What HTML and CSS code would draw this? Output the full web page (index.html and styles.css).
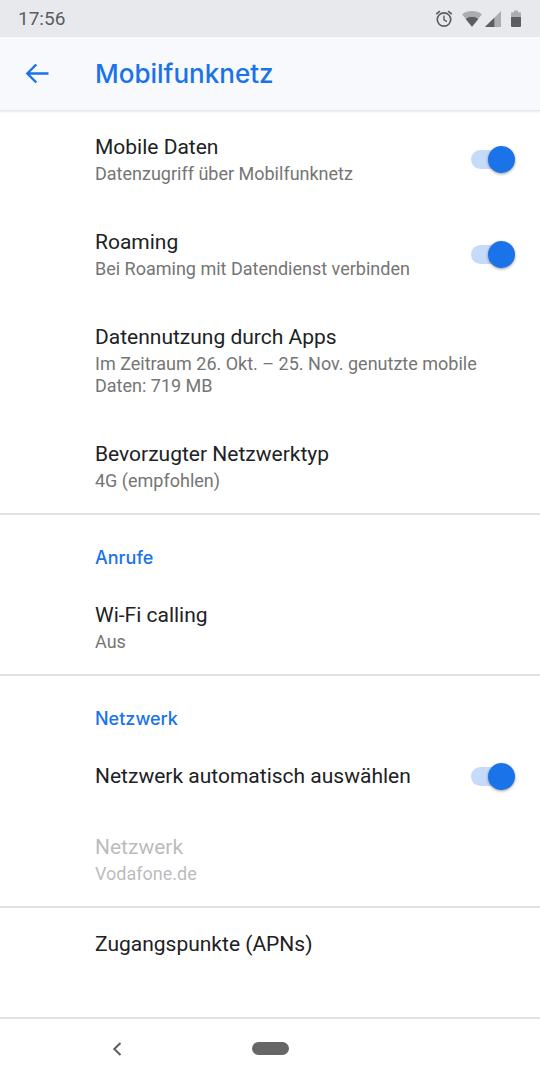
FILE: index.html
```html
<!DOCTYPE html>
<html lang="de">
<head>
<meta charset="utf-8">
<meta name="viewport" content="width=device-width, initial-scale=1">
<title>Mobilfunknetz</title>
<link rel="stylesheet" href="styles.css">
</head>
<body>
<div class="status-bar">
  <span class="clock">17:56</span>
  <div class="status-icons">
    <svg class="status-alarm" width="18" height="20" viewBox="0 0 18 20" fill="none" stroke="#5c5d60">
      <circle cx="9" cy="10.500" r="6.700" stroke-width="1.700"/>
      <path d="M9 6.500v4.400l2.900 1.800" stroke-width="1.400"/>
      <path d="M1.200 5.200l3.700-3.100M16.800 5.200l-3.700-3.100" stroke-width="1.700"/>
    </svg>
    <svg class="status-wifi" width="22" height="20" viewBox="0 0 22 20">
      <path d="M11 17.800L1 5.300Q5.300 2 11 2t10 3.300z" fill="#acadaf"/>
      <path d="M11 17.800L4.700 9.900Q7.400 7.800 11 7.800t6.300 2.100z" fill="#5c5d60"/>
    </svg>
    <svg width="16" height="20" viewBox="0 0 16 20">
      <path d="M16 2v16H0z" fill="#acadaf"/>
      <path d="M9.300 8.700V18H0z" fill="#5c5d60"/>
    </svg>
    <svg class="status-battery" width="10" height="20" viewBox="0 0 10 20">
      <path d="M3 1.500h4v1.700h2q1 0 1 1V8H0V4.200q0-1 1-1h2z" fill="#acadaf"/>
      <path d="M0 8h10v9q0 1-1 1H1q-1 0-1-1z" fill="#5c5d60"/>
    </svg>
  </div>
</div>

<header class="app-bar">
  <button class="back" type="button" aria-label="Zurück">
    <svg width="24" height="20" viewBox="0 0 24 20" fill="none" stroke="#1a73e8" stroke-width="2.400">
      <path d="M23.500 9.500H3M11.300 .5l-9 9 9 9"/>
    </svg>
  </button>
  <h1 class="app-title">Mobilfunknetz</h1>
</header>

<main class="settings">
  <section class="group">
    <label class="row">
      <span class="text"><span class="title">Mobile Daten</span><span class="summary">Datenzugriff über Mobilfunknetz</span></span>
      <input class="switch" type="checkbox" role="switch" checked>
    </label>
    <label class="row">
      <span class="text"><span class="title">Roaming</span><span class="summary">Bei Roaming mit Datendienst verbinden</span></span>
      <input class="switch" type="checkbox" role="switch" checked>
    </label>
    <button class="row" type="button">
      <span class="text"><span class="title">Datennutzung durch Apps</span><span class="summary">Im Zeitraum 26. Okt. – 25. Nov. genutzte mobile Daten: 719 MB</span></span>
    </button>
    <button class="row" type="button">
      <span class="text"><span class="title">Bevorzugter Netzwerktyp</span><span class="summary">4G (empfohlen)</span></span>
    </button>
  </section>
  <section class="group">
    <h2 class="category">Anrufe</h2>
    <button class="row" type="button">
      <span class="text"><span class="title">Wi-Fi calling</span><span class="summary">Aus</span></span>
    </button>
  </section>
  <section class="group">
    <h2 class="category">Netzwerk</h2>
    <label class="row">
      <span class="text"><span class="title">Netzwerk automatisch auswählen</span></span>
      <input class="switch" type="checkbox" role="switch" checked>
    </label>
    <button class="row" type="button" disabled>
      <span class="text"><span class="title">Netzwerk</span><span class="summary">Vodafone.de</span></span>
    </button>
  </section>
  <section class="group">
    <button class="row" type="button">
      <span class="text"><span class="title">Zugangspunkte (APNs)</span></span>
    </button>
  </section>
</main>

<nav class="nav-bar">
  <button class="nav-back" type="button" aria-label="Zurück">
    <svg width="10" height="14" viewBox="0 0 10 14" fill="none" stroke="#5c5c5c" stroke-width="2">
      <path d="M8.500 1L2.300 7l6.200 6"/>
    </svg>
  </button>
  <button class="nav-home" type="button" aria-label="Startbildschirm"></button>
</nav>
</body>
</html>
```
FILE: styles.css
```css
* {
  box-sizing: border-box;
}

body {
  margin: 0;
  min-height: 100vh;
  display: flex;
  flex-direction: column;
  background: #fff;
  color: #202124;
  font-family: Roboto, "Noto Sans", sans-serif;
}

button {
  padding: 0;
  border: 0;
  background: none;
  color: inherit;
  font: inherit;
  text-align: left;
}

svg {
  display: block;
}

.status-bar {
  display: flex;
  align-items: center;
  justify-content: space-between;
  height: 37px;
  padding: 0 19px 0 18px;
  background: #e8e9ed;
}

.clock {
  color: #5c5d60;
  font-size: 19px;
  line-height: 22px;
}

.status-icons {
  display: flex;
}

.status-alarm {
  margin-right: 8px;
}

.status-wifi {
  margin-right: 2px;
}

.status-battery {
  margin-left: 10px;
}

.app-bar {
  display: flex;
  align-items: center;
  height: 74px;
  padding-left: 25px;
  background: #f8f9fc;
  border-bottom: 1px solid #e6e7e9;
  box-shadow: 0 1px 2px #00000018;
}

.back {
  width: 70px;
}

.app-title {
  margin: 0;
  color: #1a73e8;
  font-family: Inter, Roboto, sans-serif;
  font-size: 26px;
  font-weight: 500;
  line-height: 32px;
}

.settings {
  flex: 1;
}

.group + .group {
  border-top: 2px solid #e2e2e2;
}

.category {
  margin: 0;
  padding: 32px 25px 11px 95px;
  color: #1a73e8;
  font-family: Inter, Roboto, sans-serif;
  font-size: 18px;
  font-weight: 500;
  line-height: 21px;
}

.row {
  display: flex;
  align-items: center;
  justify-content: space-between;
  gap: 20px;
  width: 100%;
  padding: 23px 25px 21px 95px;
}

.row:disabled {
  opacity: 0.3;
}

.text {
  display: flex;
  flex-direction: column;
  gap: 2px;
}

.title {
  font-size: 21px;
  line-height: 27px;
}

.summary {
  color: #757575;
  font-size: 18px;
  line-height: 22px;
}

.row:disabled .summary {
  color: #202124;
}

.switch {
  appearance: none;
  display: grid;
  align-items: center;
  flex: none;
  width: 44px;
  height: 27px;
  margin: 0;
}

.switch::before,
.switch::after {
  content: "";
  grid-area: 1 / 1;
}

.switch::before {
  width: 36px;
  height: 19px;
  border-radius: 10px;
  background: #dadce0;
}

.switch::after {
  width: 27px;
  height: 27px;
  border-radius: 50%;
  background: #9aa0a6;
  box-shadow: 0 1px 3px #00000066;
}

.switch:checked::before {
  background: #c6dbf9;
}

.switch:checked::after {
  justify-self: end;
  background: #1a73e8;
}

.nav-bar {
  display: grid;
  grid-template-columns: 1fr auto 1fr;
  align-items: center;
  height: 63px;
  padding-bottom: 2px;
  border-top: 2px solid #e2e2e2;
}

.nav-back {
  justify-self: center;
  padding: 8px;
  margin-right: 18px;
}

.nav-home {
  width: 37px;
  height: 13px;
  border-radius: 7px;
  background: #666;
}
```
